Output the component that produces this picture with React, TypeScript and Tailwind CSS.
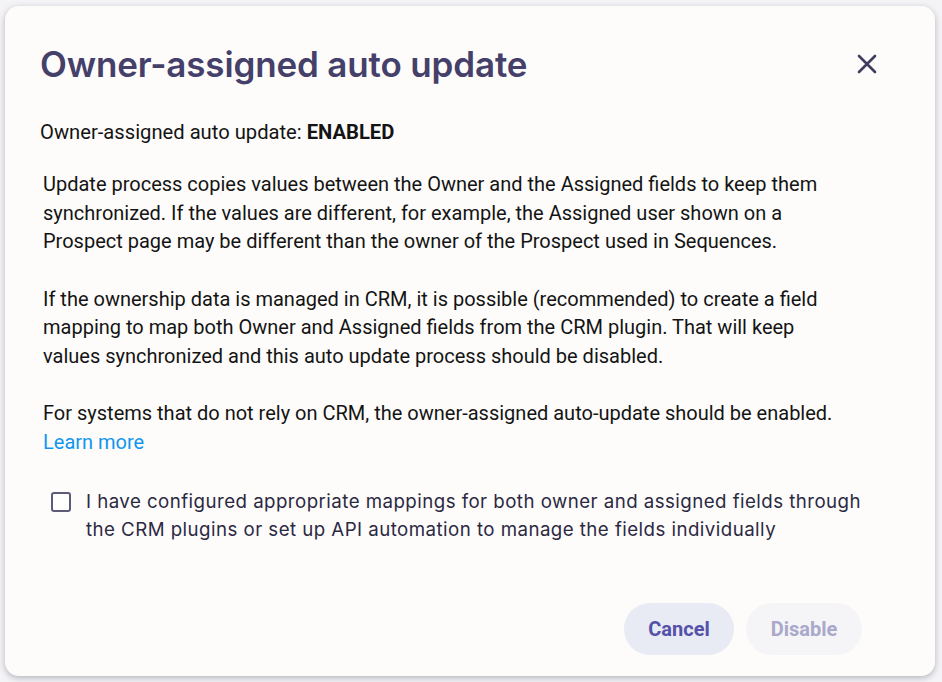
import React, { useState } from 'react';

const App: React.FC = () => {
  const [checked, setChecked] = useState(false);

  return (
    <div className="w-[942px] h-[682px] bg-[#f4f4f6] p-[6px] pl-[5px] pr-[7px] font-['Roboto',sans-serif]">
      <div className="h-full rounded-[14px] bg-[#fdfcfb] shadow-[0_2px_6px_rgba(60,60,90,0.35)] flex flex-col pl-[35px] pr-[60px]">
        <div className="flex items-center justify-between pt-[36px] pr-0">
          <h1 className="font-['Inter',sans-serif] font-semibold text-[35px] leading-[44px] tracking-[-0.15px] text-[#45406a]">
            Owner-assigned auto update
          </h1>
          <button className="w-[30px] h-[30px] flex items-center justify-center text-[#3f3b61] mr-[-7px]">
            <svg width="22" height="22" viewBox="0 0 22 22" fill="none" stroke="currentColor" strokeWidth="2.6" strokeLinecap="round">
              <path d="M3 3 L19 19 M19 3 L3 19" />
            </svg>
          </button>
        </div>

        <p className="mt-[33px] text-[20.2px] leading-[26px] text-[#141414]">
          Owner-assigned auto update: <span className="font-bold">ENABLED</span>
        </p>

        <div className="pl-[3px] mt-[25px] max-w-[803px] text-[20px] leading-[28.5px] text-[#141414] flex flex-col gap-[29px]">
          <p>
            Update process copies values between the Owner and the Assigned fields to keep them synchronized. If the values are different, for example, the Assigned user shown on a Prospect page may be different than the owner of the Prospect used in Sequences.
          </p>
          <p>
            If the ownership data is managed in CRM, it is possible (recommended) to create a field mapping to map both Owner and Assigned fields from the CRM plugin. That will keep values synchronized and this auto update process should be disabled.
          </p>
          <p>
            For systems that do not rely on CRM, the owner-assigned auto-update should be enabled.
            <br />
            <a className="text-[#1196ee]">Learn more</a>
          </p>
        </div>

        <label className="mt-[32px] flex items-start gap-[15px] pl-[11px] cursor-pointer">
          <button
            onClick={() => setChecked(!checked)}
            className="mt-[4px] w-[20px] h-[20px] shrink-0 rounded-[3px] border-2 border-[#5e5b78] bg-white"
          />
          <span className="max-w-[790px] font-['Inter',sans-serif] text-[18.7px] leading-[28px] tracking-[0.45px] text-[#2b2942]">
            I have configured appropriate mappings for both owner and assigned fields through the CRM plugins or set up API automation to manage the fields individually
          </span>
        </label>

        <div className="mt-auto mb-[21px] mr-[13px] flex justify-end gap-[12px]">
          <button className="h-[52px] w-[110px] rounded-full bg-[#e8eaf4] text-[#5551a9] font-bold text-[20px]">
            Cancel
          </button>
          <button className="h-[52px] w-[116px] rounded-full bg-[#f5f5f7] text-[#aaa8cb] font-bold text-[20px]">
            Disable
          </button>
        </div>
      </div>
    </div>
  );
};

export default App;
